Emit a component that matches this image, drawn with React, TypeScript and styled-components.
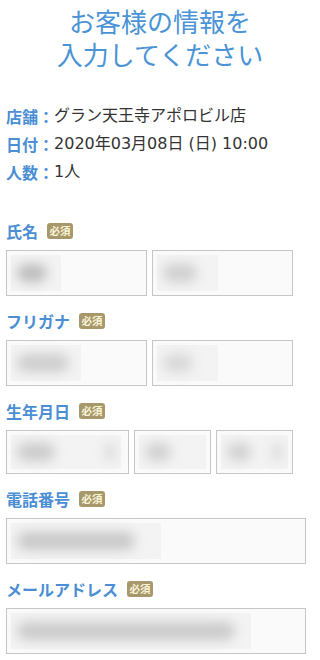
import React from "react";
import styled, { createGlobalStyle } from "styled-components";

const Global = createGlobalStyle`
  html, body { margin: 0; padding: 0; background: #fff; }
  body { font-family: "Noto Sans CJK JP", "Noto Sans", sans-serif; color: #333; }
  * { box-sizing: border-box; }
`;

const Page = styled.div`
  width: 320px;
  padding: 4px 6px 0;
`;

const Title = styled.h1`
  margin: 0;
  font-size: 26px;
  font-weight: 400;
  color: #4a94d6;
  text-align: center;
`;

const TitleLine = styled.span`
  display: block;
  height: 33px;
  line-height: 33px;
`;

const Info = styled.div`
  margin-top: 32px;
`;

const InfoRow = styled.div`
  display: flex;
  font-size: 16px;
  line-height: 28px;
  height: 28px;
  color: #333;
  white-space: nowrap;
`;

const InfoLabel = styled.span`
  font-family: "Noto Sans CJK JP", sans-serif;
  font-weight: 700;
  color: #4a8ed4;
`;

const InfoValue = styled.span`
  font-family: "DejaVu Sans", "Noto Sans CJK JP", sans-serif;
  font-size: 16px;
`;

const Form = styled.div`
  margin-top: 37px;
  width: 300px;
`;

const Field = styled.div`
  margin-bottom: 17px;
`;

const LabelRow = styled.div`
  display: flex;
  align-items: center;
  height: 16px;
  margin-bottom: 11px;
`;

const Label = styled.span`
  font-size: 16px;
  line-height: 16px;
  font-weight: 700;
  color: #4a8ed4;
`;

const Badge = styled.span`
  margin-left: 9px;
  width: 26px;
  height: 16px;
  border-radius: 3px;
  background: #a6986a;
  color: #fbf3d6;
  font-size: 10.5px;
  font-weight: 700;
  line-height: 16px;
  text-align: center;
`;

const InputRow = styled.div`
  display: flex;
  gap: 5px;
`;

const InputBox = styled.div<{ $w: string; $h?: number }>`
  flex: none;
  width: ${(p) => p.$w};
  height: ${(p) => p.$h ?? 46}px;
  border: 1px solid #c6c6c6;
  background: #fafafa;
  display: flex;
  align-items: stretch;
  padding: 4px;
  overflow: hidden;
`;

const BlurArea = styled.div<{ $w: number }>`
  width: ${(p) => p.$w}px;
  background: #f3f3f3;
  display: flex;
  align-items: center;
  justify-content: space-between;
  padding: 0 6px;
`;

const Blob = styled.div<{ $w: number; $tone?: string }>`
  width: ${(p) => p.$w}px;
  height: 18px;
  border-radius: 9px;
  background: ${(p) => p.$tone ?? "#c4c4c4"};
  filter: blur(6px);
`;

const Required = () => <Badge>必須</Badge>;

export default function App() {
  return (
    <>
      <Global />
      <Page>
        <Title>
          <TitleLine>お客様の情報を</TitleLine>
          <TitleLine>入力してください</TitleLine>
        </Title>
        <Info>
          <InfoRow>
            <InfoLabel>店舗：</InfoLabel>
            <InfoValue>グラン天王寺アポロビル店</InfoValue>
          </InfoRow>
          <InfoRow>
            <InfoLabel>日付：</InfoLabel>
            <InfoValue>2020年03月08日 (日) 10:00</InfoValue>
          </InfoRow>
          <InfoRow>
            <InfoLabel>人数：</InfoLabel>
            <InfoValue>1人</InfoValue>
          </InfoRow>
        </Info>
        <Form>
          <Field>
            <LabelRow>
              <Label>氏名</Label>
              <Required />
            </LabelRow>
            <InputRow>
              <InputBox $w="141px">
                <BlurArea $w={50}>
                  <Blob $w={30} $tone="#bcbcbc" />
                </BlurArea>
              </InputBox>
              <InputBox $w="141px">
                <BlurArea $w={61}>
                  <Blob $w={34} $tone="#cfcfcf" />
                </BlurArea>
              </InputBox>
            </InputRow>
          </Field>
          <Field>
            <LabelRow>
              <Label>フリガナ</Label>
              <Required />
            </LabelRow>
            <InputRow>
              <InputBox $w="141px">
                <BlurArea $w={70}>
                  <Blob $w={52} $tone="#cdcdcd" />
                </BlurArea>
              </InputBox>
              <InputBox $w="141px">
                <BlurArea $w={61}>
                  <Blob $w={30} $tone="#d8d8d8" />
                </BlurArea>
              </InputBox>
            </InputRow>
          </Field>
          <Field>
            <LabelRow>
              <Label>生年月日</Label>
              <Required />
            </LabelRow>
            <InputRow>
              <InputBox $w="123px" $h={44}>
                <BlurArea $w={110}>
                  <Blob $w={38} $tone="#cbcbcb" />
                  <Blob $w={10} $tone="#dadada" />
                </BlurArea>
              </InputBox>
              <InputBox $w="77px" $h={44}>
                <BlurArea $w={67}>
                  <Blob $w={26} $tone="#d0d0d0" />
                </BlurArea>
              </InputBox>
              <InputBox $w="77px" $h={44}>
                <BlurArea $w={67}>
                  <Blob $w={24} $tone="#d0d0d0" />
                  <Blob $w={10} $tone="#dadada" />
                </BlurArea>
              </InputBox>
            </InputRow>
          </Field>
          <Field>
            <LabelRow>
              <Label>電話番号</Label>
              <Required />
            </LabelRow>
            <InputRow>
              <InputBox $w="300px">
                <BlurArea $w={150}>
                  <Blob $w={118} $tone="#c8c8c8" />
                </BlurArea>
              </InputBox>
            </InputRow>
          </Field>
          <Field>
            <LabelRow>
              <Label>メールアドレス</Label>
              <Required />
            </LabelRow>
            <InputRow>
              <InputBox $w="300px">
                <BlurArea $w={240}>
                  <Blob $w={218} $tone="#cacaca" />
                </BlurArea>
              </InputBox>
            </InputRow>
          </Field>
        </Form>
      </Page>
    </>
  );
}
